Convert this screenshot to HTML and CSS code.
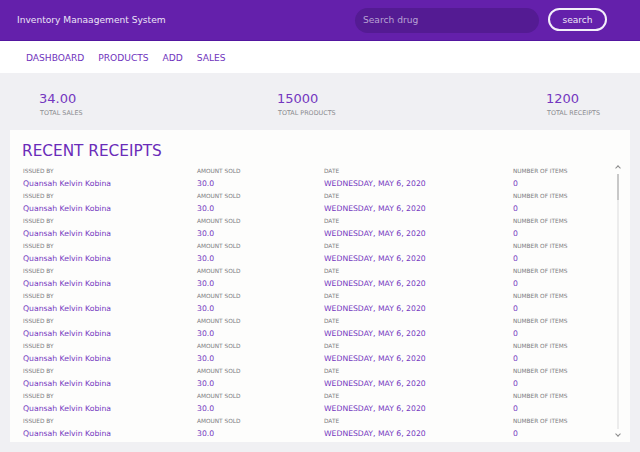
FILE: index.html
```html
<!DOCTYPE html>
<html>
<head>
<meta charset="utf-8">
<link rel="stylesheet" href="styles.css">
</head>
<body>
<header class="topbar">
  <div class="brand">Inventory Manaagement System</div>
  <div class="search">
    <input class="search-input" type="text" placeholder="Search drug">
    <button class="search-btn">search</button>
  </div>
</header>
<nav class="nav">
  <a href="#">DASHBOARD</a>
  <a href="#">PRODUCTS</a>
  <a href="#">ADD</a>
  <a href="#">SALES</a>
</nav>
<main class="main">
  <section class="stats">
    <div class="stat"><div class="stat-value">34.00</div><div class="stat-label">TOTAL SALES</div></div>
    <div class="stat"><div class="stat-value">15000</div><div class="stat-label">TOTAL PRODUCTS</div></div>
    <div class="stat"><div class="stat-value">1200</div><div class="stat-label">TOTAL RECEIPTS</div></div>
  </section>
  <section class="card">
    <h1 class="card-title">RECENT RECEIPTS</h1>
    <div class="list-wrap">
      <div class="list" id="list"></div>
      <div class="scrollbar">
        <span class="sb-arrow up"></span>
        <span class="sb-thumb"></span>
        <span class="sb-track"></span>
        <span class="sb-arrow down"></span>
      </div>
    </div>
  </section>
</main>
<script src="app.js"></script>
</body>
</html>
```
FILE: app.js
```js
var list = document.getElementById('list');
var html = '';
for (var i = 0; i < 11; i++) {
  html += '<div class="row">' +
    '<div class="cell"><div class="lbl">ISSUED BY</div><div class="val">Quansah Kelvin Kobina</div></div>' +
    '<div class="cell"><div class="lbl">AMOUNT SOLD</div><div class="val">30.0</div></div>' +
    '<div class="cell"><div class="lbl">DATE</div><div class="val">WEDNESDAY, MAY 6, 2020</div></div>' +
    '<div class="cell"><div class="lbl">NUMBER OF ITEMS</div><div class="val">0</div></div>' +
    '</div>';
}
list.innerHTML = html;
```
FILE: styles.css
```css
* { box-sizing: border-box; }
html, body { margin: 0; padding: 0; }
body {
  font-family: "DejaVu Sans", "Liberation Sans", sans-serif;
  background: #f0f0f3;
  width: 640px;
  height: 452px;
  overflow: hidden;
}
.topbar {
  height: 41px;
  background: #6420ab;
  border-bottom: 1px solid #5316a0;
  display: flex;
  align-items: center;
  justify-content: space-between;
  padding: 0 33px 1px 17px;
}
.brand {
  color: #ece4f7;
  font-size: 9.1px;
}
.search {
  display: flex;
  align-items: center;
  gap: 9px;
}
.search-input {
  width: 184px;
  height: 25px;
  border: none;
  outline: none;
  border-radius: 13px;
  background: #541b93;
  color: #fff;
  font-family: inherit;
  font-size: 9.1px;
  padding: 0 0 0 8px;
  margin-top: 1px;
}
.search-input::placeholder { color: #b8a3d4; }
.search-btn {
  width: 59px;
  height: 23px;
  border: 2px solid #f3eefa;
  border-radius: 12px;
  background: transparent;
  color: #ece4f7;
  font-family: inherit;
  font-size: 9.1px;
  padding: 0;
}
.nav {
  height: 32px;
  background: #ffffff;
  display: flex;
  align-items: center;
  gap: 14px;
  padding: 2px 0 0 26px;
}
.nav a {
  color: #6f33bd;
  text-decoration: none;
  font-size: 9.1px;
}
.main { padding: 0 10px; }
.stats {
  display: grid;
  grid-template-columns: 238px 269px auto;
  padding: 18px 0 12px 29px;
}
.stat-value {
  color: #7437c0;
  font-size: 13px;
  line-height: 16px;
}
.stat-label {
  color: #8a8a8e;
  font-size: 6.4px;
  line-height: 10px;
  padding-left: 1px;
  margin-top: 1px;
}
.card {
  background: #fdfdfc;
  height: 312px;
  padding: 11px 5px 0 12px;
}
.card-title {
  margin: 0;
  font-weight: normal;
  color: #6a2cb9;
  font-size: 15.3px;
  line-height: 20px;
}
.list-wrap {
  margin-top: 2px;
  display: flex;
  height: 278px;
}
.list {
  flex: 1;
  overflow: hidden;
  padding-top: 3px;
}
.row {
  display: grid;
  grid-template-columns: 174px 127px 189px 1fr;
  height: 25px;
  padding-left: 1px;
}
.lbl {
  color: #7c7c80;
  font-size: 5.8px;
  line-height: 10px;
}
.val {
  color: #7437c0;
  font-size: 7.7px;
  line-height: 15px;
}
.scrollbar {
  width: 8px;
  display: flex;
  flex-direction: column;
  align-items: center;
  margin-right: 3px;
}
.sb-arrow {
  width: 4px;
  height: 4px;
  border-left: 1px solid #8a8a8a;
  border-top: 1px solid #8a8a8a;
  flex: none;
}
.sb-arrow.up { transform: rotate(45deg); margin-top: 3px; }
.sb-arrow.down { transform: rotate(225deg); margin-bottom: 5px; }
.sb-thumb {
  width: 2px;
  height: 26px;
  background: #c8c8c8;
  margin-top: 4px;
  flex: none;
}
.sb-track {
  width: 2px;
  flex: 1;
  background: #ececec;
  margin-bottom: 3px;
}
```
